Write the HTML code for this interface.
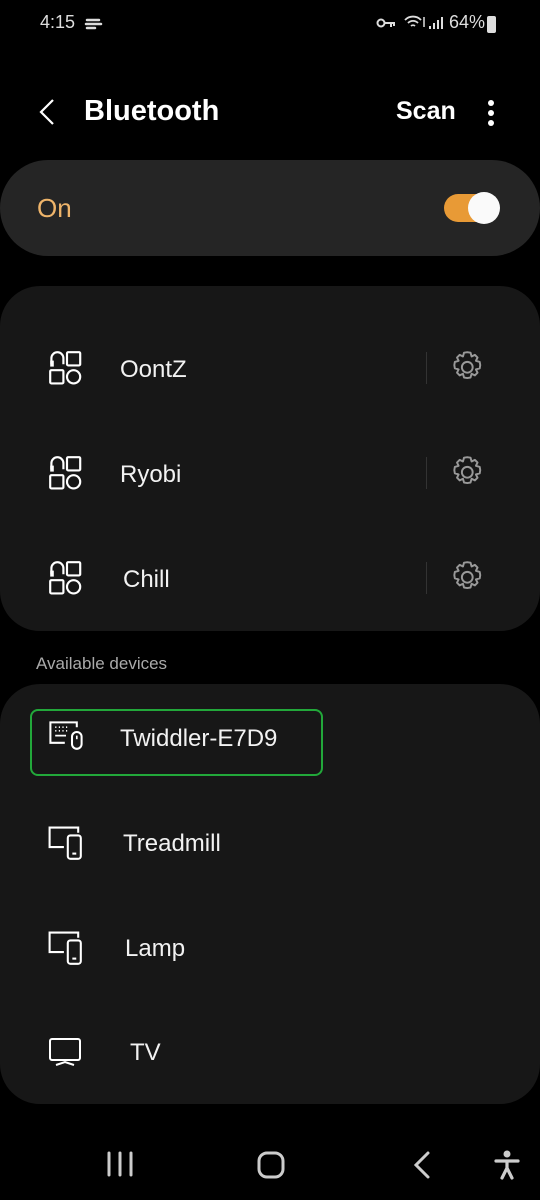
<!DOCTYPE html>
<html><head><meta charset="utf-8"><style>
*{margin:0;padding:0;box-sizing:border-box}
body{width:540px;height:1200px;background:#000;font-family:"Liberation Sans",Roboto,sans-serif;color:#fff;position:relative;overflow:hidden}
.a{position:absolute}
.t{font-size:24px;color:#f2f2f2}
svg{position:absolute;overflow:visible}
</style></head><body>
<div class="a" style="left:40px;top:12px;font-size:18px;color:#ddd">4:15</div>
<svg style="left:84px;top:16px" width="20" height="16" viewBox="0 0 20 16"><path d="M3 4h12M2 8h15M3 12h8" stroke="#ddd" stroke-width="2.5" fill="none" stroke-linecap="round"/></svg>
<svg style="left:376px;top:17px" width="20" height="12"><circle cx="5" cy="6" r="3.5" stroke="#ddd" stroke-width="2" fill="none"/><path d="M9 6h10M15 6v4M18 6v3" stroke="#ddd" stroke-width="2" fill="none"/></svg>
<svg style="left:404px;top:14px" width="24" height="18"><path d="M1 6a11 11 0 0 1 16 0M4 9a7 7 0 0 1 10 0M7 12a3 3 0 0 1 4 0" stroke="#ddd" stroke-width="1.8" fill="none"/><path d="M20 3v10" stroke="#ddd" stroke-width="1.5"/></svg>
<svg style="left:428px;top:16px" width="16" height="14"><path d="M2 13v-3M6 13v-6M10 13v-9M14 13v-12" stroke="#ddd" stroke-width="2"/></svg>
<div class="a" style="left:449px;top:12px;font-size:18px;color:#ddd">64%</div>
<div class="a" style="left:487px;top:16px;width:9px;height:17px;background:#ddd;border-radius:2px"></div>
<svg style="left:38px;top:98px" width="18" height="30"><path d="M15 2L3 14l12 12" stroke="#fff" stroke-width="2.2" fill="none"/></svg>
<div class="a" style="left:84px;top:95px;font-size:29px;font-weight:bold">Bluetooth</div>
<div class="a" style="left:396px;top:97px;font-size:25px;font-weight:bold">Scan</div>
<div class="a" style="left:488px;top:100px;width:6px;height:6px;border-radius:3px;background:#fff;box-shadow:0 10px 0 #fff,0 20px 0 #fff"></div>

<div class="a" style="left:0;top:160px;width:540px;height:96px;background:#252525;border-radius:48px"></div>
<div class="a" style="left:37px;top:193px;font-size:26px;color:#eeb46a">On</div>
<div class="a" style="left:444px;top:194px;width:54px;height:28px;background:#e89a36;border-radius:14px"></div>
<div class="a" style="left:468px;top:192px;width:32px;height:32px;background:#fafafa;border-radius:16px"></div>

<div class="a" style="left:0;top:286px;width:540px;height:345px;background:#171717;border-radius:40px"></div>
<div class="a t" style="left:120px;top:356px">OontZ</div>
<div class="a t" style="left:120px;top:461px">Ryobi</div>
<div class="a t" style="left:123px;top:566px">Chill</div>

<div class="a" style="left:36px;top:654px;font-size:17px;color:#aaa">Available devices</div>
<div class="a" style="left:0;top:684px;width:540px;height:420px;background:#171717;border-radius:40px"></div>
<div class="a" style="left:30px;top:709px;width:293px;height:67px;border:2px solid #22a83a;border-radius:8px"></div>
<div class="a t" style="left:120px;top:725px">Twiddler-E7D9</div>
<div class="a t" style="left:123px;top:830px">Treadmill</div>
<div class="a t" style="left:125px;top:935px">Lamp</div>
<div class="a t" style="left:130px;top:1039px">TV</div>

<svg width="0" height="0"><defs>
<g id="hp" transform="scale(1.2)"><path d="M2 11V6a5 5 0 0 1 10 0v5" stroke="#fff" stroke-width="1.8" fill="none"/><rect x="1" y="8" width="3" height="5" fill="#fff"/><rect x="15" y="1" width="11" height="11" rx="1" stroke="#fff" stroke-width="1.8" fill="none"/><rect x="1" y="16" width="11" height="11" rx="1" stroke="#fff" stroke-width="1.8" fill="none"/><circle cx="20.5" cy="21.5" r="5.5" stroke="#fff" stroke-width="1.8" fill="none"/></g>
<g id="gear" transform="scale(1.08)"><path d="M16 2l3 .5 1 3.5 3-1.5 2.5 2.5-1.5 3 3.5 1 .5 3-.5 3-3.5 1 1.5 3-2.5 2.5-3-1.5-1 3.5-3 .5-3-.5-1-3.5-3 1.5-2.5-2.5 1.5-3-3.5-1-.5-3 .5-3 3.5-1-1.5-3 2.5-2.5 3 1.5 1-3.5z" stroke="#999" stroke-width="1.8" fill="none" stroke-linejoin="round"/><circle cx="16" cy="16" r="5" stroke="#999" stroke-width="1.8" fill="none"/></g>
<g id="dev" transform="scale(1.3)"><path d="M13 17H2V2h22v4" stroke="#fff" stroke-width="1.6" fill="none"/><rect x="16" y="8" width="10" height="18" rx="2" stroke="#fff" stroke-width="1.6" fill="none"/><path d="M19.5 22h3" stroke="#fff" stroke-width="1.6"/></g>
</defs></svg>
<svg style="left:49px;top:351px" width="34" height="34"><use href="#hp"/></svg>
<svg style="left:49px;top:456px" width="34" height="34"><use href="#hp"/></svg>
<svg style="left:49px;top:561px" width="34" height="34"><use href="#hp"/></svg>
<div class="a" style="left:426px;top:352px;width:1px;height:32px;background:#333"></div>
<div class="a" style="left:426px;top:457px;width:1px;height:32px;background:#333"></div>
<div class="a" style="left:426px;top:562px;width:1px;height:32px;background:#333"></div>
<svg style="left:450px;top:350px" width="34" height="34"><use href="#gear"/></svg>
<svg style="left:450px;top:455px" width="34" height="34"><use href="#gear"/></svg>
<svg style="left:450px;top:560px" width="34" height="34"><use href="#gear"/></svg>

<svg style="left:48px;top:720px" width="36" height="32"><g transform="scale(1.2)"><path d="M14 19H2V2h22v4" stroke="#fff" stroke-width="1.7" fill="none"/><path d="M6 6h1M9 6h1M12 6h1M15 6h1M6 9h1M9 9h1M12 9h1M15 9h1M6 13h9" stroke="#fff" stroke-width="1.4"/><rect x="20" y="10" width="8" height="14" rx="4" stroke="#fff" stroke-width="1.7" fill="none"/><path d="M24 13v3" stroke="#fff" stroke-width="1.4"/></g></svg>
<svg style="left:47px;top:825px" width="36" height="36"><use href="#dev"/></svg>
<svg style="left:47px;top:930px" width="36" height="36"><use href="#dev"/></svg>
<svg style="left:48px;top:1037px" width="36" height="30"><rect x="2" y="2" width="30" height="21" rx="2" stroke="#fff" stroke-width="2" fill="none"/><path d="M8 28l9-3 9 3" stroke="#fff" stroke-width="2" fill="none"/></svg>

<svg style="left:106px;top:1150px" width="30" height="30"><path d="M3 3v22M14 3v22M25 3v22" stroke="#ccc" stroke-width="3" stroke-linecap="round"/></svg>
<svg style="left:257px;top:1151px" width="28" height="28"><rect x="2" y="2" width="24" height="24" rx="8" stroke="#ccc" stroke-width="3" fill="none"/></svg>
<svg style="left:413px;top:1151px" width="20" height="28"><path d="M15 2L3 14l12 12" stroke="#ccc" stroke-width="3" fill="none" stroke-linecap="round"/></svg>
<svg style="left:494px;top:1150px" width="26" height="32"><circle cx="13" cy="4" r="3.5" fill="#ccc"/><path d="M2 11h22M13 11v8M13 18l-5 10M13 18l5 10" stroke="#ccc" stroke-width="3.2" stroke-linecap="round" fill="none"/></svg>
</body></html>
